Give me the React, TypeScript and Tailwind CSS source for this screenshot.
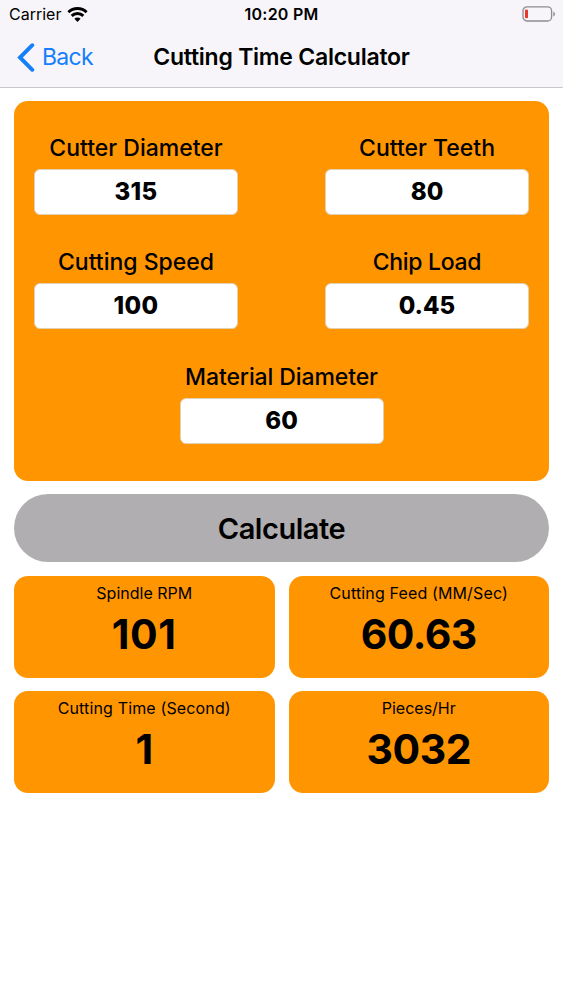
import React from "react";

type FieldProps = {
  label: string;
  value: string;
  labelClass?: string;
  valueClass?: string;
};

const Field: React.FC<FieldProps> = ({
  label,
  value,
  labelClass = "",
  valueClass = "",
}) => (
  <div className="flex w-[204px] flex-col items-center">
    <div
      className={`h-7 text-[23px] leading-7 font-medium whitespace-nowrap ${labelClass}`}
    >
      {label}
    </div>
    <div
      className={`mt-[6.5px] h-[46px] w-full rounded-[6px] border border-[#e0d0b4] bg-white text-center text-[24px] leading-[44px] font-extrabold ${valueClass}`}
    >
      {value}
    </div>
  </div>
);

type ResultProps = {
  label: string;
  value: string;
  labelClass?: string;
  valueClass?: string;
};

const Result: React.FC<ResultProps> = ({
  label,
  value,
  labelClass = "",
  valueClass = "",
}) => (
  <div className="flex h-[102px] flex-col items-center rounded-[14px] bg-[#ff9500]">
    <div
      className={`mt-[6.5px] h-5 text-[16px] leading-5 whitespace-nowrap ${labelClass}`}
    >
      {label}
    </div>
    <div
      className={`mt-[7.5px] h-12 text-[41px] leading-[48px] font-bold ${valueClass}`}
    >
      {value}
    </div>
  </div>
);

const WifiIcon: React.FC = () => (
  <svg className="ml-[6px] h-[15px] w-[21px]" viewBox="0 0 21 15">
    <g fill="none" stroke="#000" strokeWidth="2.9">
      <path d="M1.4 5.2a13 13 0 0 1 18.2 0" />
      <path d="M4.7 8.9a8.3 8.3 0 0 1 11.6 0" />
    </g>
    <path d="M7.4 11.8a4.4 4.4 0 0 1 6.2 0L10.5 15z" />
  </svg>
);

const BatteryIcon: React.FC = () => (
  <svg className="h-4 w-[34px]" viewBox="0 0 34 16">
    <rect
      x="1"
      y="0.8"
      width="28.6"
      height="14.2"
      rx="4"
      fill="none"
      stroke="#8e8c90"
      strokeWidth="1.3"
    />
    <rect x="3" y="3.4" width="3" height="8.8" rx="1" fill="#e8392f" />
    <path d="M31.3 5.4c2.2.8 2.2 4.2 0 5z" fill="#8e8c90" />
  </svg>
);

const App: React.FC = () => {
  return (
    <div className="min-h-[1000px] w-full bg-white font-['Inter',sans-serif] text-black">
      <header className="h-[88px] border-b border-[#c9c7cb] bg-[#f7f5f9]">
        <div className="grid h-7 grid-cols-3 items-center">
          <div className="flex items-center pl-[9px]">
            <span className="text-[16px] leading-7">Carrier</span>
            <WifiIcon />
          </div>
          <div className="text-center text-[16px] leading-7 font-semibold tracking-[0.25px]">
            10:20 PM
          </div>
          <div className="flex justify-end pr-[7px]">
            <BatteryIcon />
          </div>
        </div>
        <div className="grid h-[59px] grid-cols-[1fr_auto_1fr] items-center">
          <div className="flex items-center pl-[17px] text-[#157efb]">
            <svg className="h-[29px] w-[18px]" viewBox="0 0 18 29">
              <path
                d="M15.3 2.2 3 14.5 15.3 26.8"
                fill="none"
                stroke="currentColor"
                strokeWidth="3.9"
                strokeLinecap="round"
              />
            </svg>
            <span className="ml-[7px] text-[23px] tracking-[-0.7px]">Back</span>
          </div>
          <h1 className="text-[23px] font-semibold tracking-[-0.24px] whitespace-nowrap">
            Cutting Time Calculator
          </h1>
          <div />
        </div>
      </header>

      <main className="px-[14px] pt-[12.5px]">
        <section className="flex h-[380.5px] flex-col items-center rounded-[14px] bg-[#ff9500] px-5 pt-[33.5px]">
          <div className="flex w-full justify-between">
            <Field
              label="Cutter Diameter"
              value="315"
              valueClass="tracking-[0.4px]"
            />
            <Field label="Cutter Teeth" value="80" />
          </div>
          <div className="mt-[33.5px] flex w-full justify-between">
            <Field
              label="Cutting Speed"
              value="100"
              valueClass="tracking-[0.4px]"
            />
            <Field
              label="Chip Load"
              value="0.45"
              labelClass="tracking-[-0.3px]"
            />
          </div>
          <div className="mt-[34.5px]">
            <Field
              label="Material Diameter"
              value="60"
              labelClass="tracking-[-0.1px]"
            />
          </div>
        </section>

        <button className="mt-[13px] block h-[68px] w-full rounded-full bg-[#b0aeb1] pt-[2px] text-[29px] font-semibold tracking-[-0.45px]">
          Calculate
        </button>

        <div className="mt-[14px] grid grid-cols-2 gap-x-[14px] gap-y-[13px]">
          <Result
            label="Spindle RPM"
            value="101"
            valueClass="tracking-[0.6px]"
          />
          <Result
            label="Cutting Feed (MM/Sec)"
            value="60.63"
            labelClass="tracking-[0.14px]"
            valueClass="tracking-[-0.5px]"
          />
          <Result
            label="Cutting Time (Second)"
            value="1"
            labelClass="tracking-[0.14px]"
          />
          <Result
            label="Pieces/Hr"
            value="3032"
            valueClass="tracking-[-0.5px]"
          />
        </div>
      </main>
    </div>
  );
};

export default App;
